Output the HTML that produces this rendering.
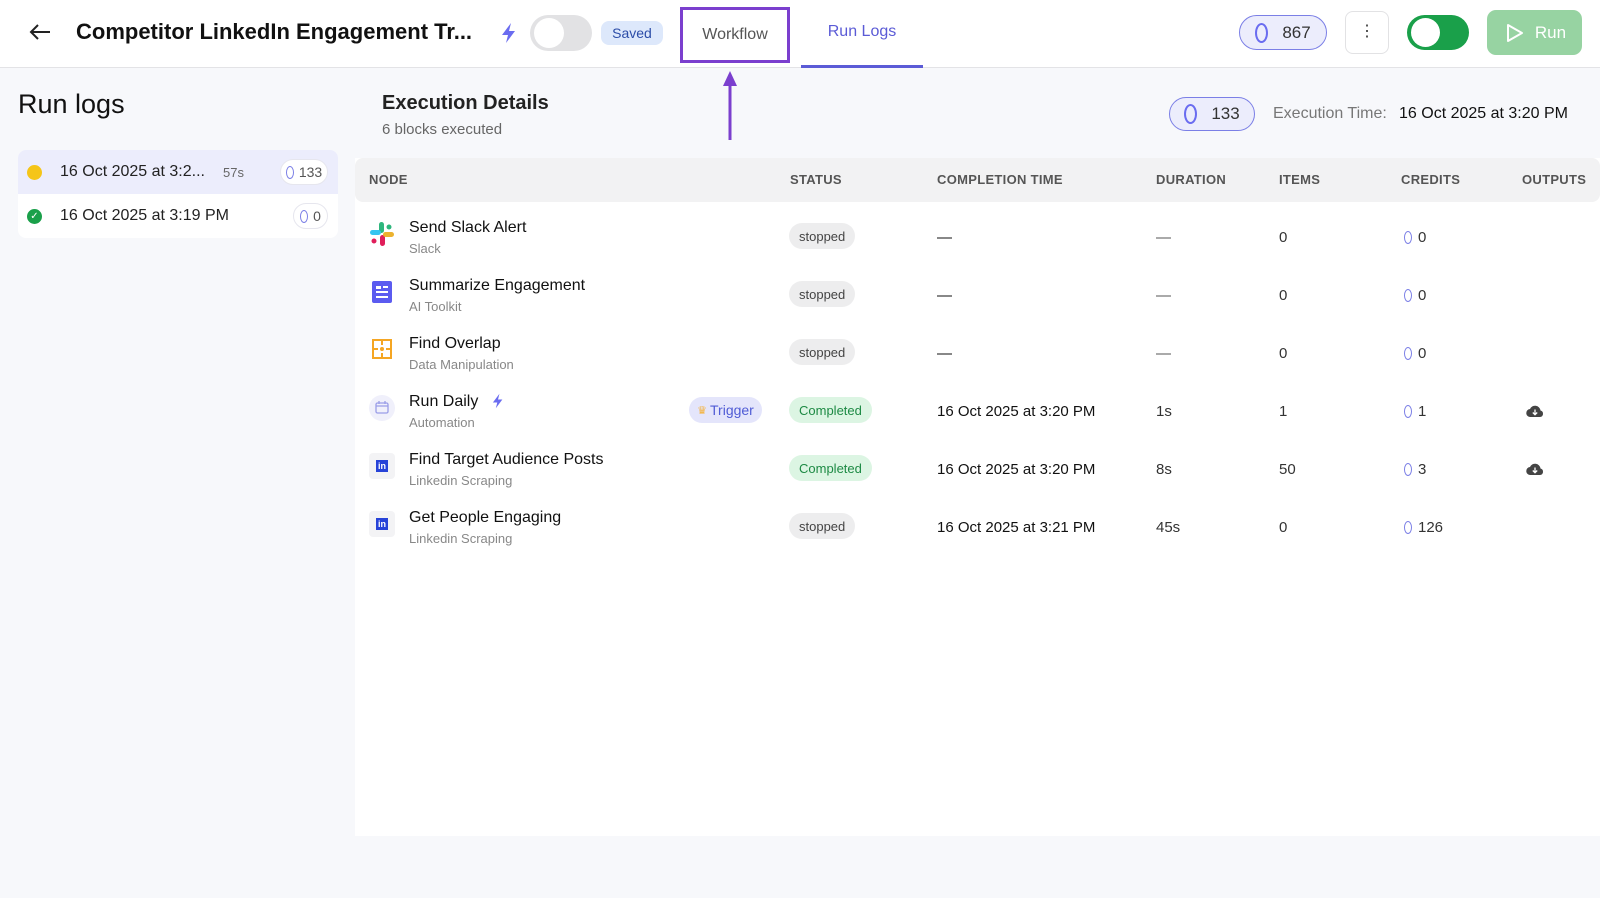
<!DOCTYPE html>
<html><head><meta charset="utf-8"><style>
*{box-sizing:border-box;margin:0;padding:0}
body{width:1600px;height:898px;overflow:hidden;background:#f7f8fb;font-family:"Liberation Sans",sans-serif;color:#111;position:relative}
.a{position:absolute}
.hdr{left:0;top:0;width:1600px;height:68px;background:#fff;border-bottom:1px solid #e3e3e6}
.pill{border-radius:20px;display:flex;align-items:center;justify-content:center}
.th{top:172px;font-size:13px;color:#555;letter-spacing:.3px;font-weight:bold}
.st{height:26px;border-radius:13px;font-size:13px;display:flex;align-items:center;padding:0 10px}
.stop{background:#ededee;color:#444}
.comp{background:#dcf5e3;color:#1d8a44}
.nm{left:409px;font-size:16px}
.sb{left:409px;font-size:13px;color:#888}
.cell{font-size:15px;margin-top:2px}
.coin{display:inline-block;width:8px;height:13px;border:1.5px solid #7b7fe6;border-radius:50%;vertical-align:-2px;margin-right:6px}
</style></head><body>
<div class="a hdr"></div>
<svg class="a" style="left:28px;top:22px" width="24" height="20" viewBox="0 0 24 20"><path d="M22 10H3M10 3L3 10l7 7" stroke="#222" stroke-width="2" fill="none"/></svg>
<div class="a" style="left:76px;top:19px;font-size:22px;font-weight:bold">Competitor LinkedIn Engagement Tr...</div>
<svg class="a" style="left:500px;top:22px" width="18" height="22" viewBox="0 0 18 22"><path d="M11 1L2 13h6l-2 8 9-12H9z" fill="#6a6cf0"/></svg>
<div class="a" style="left:530px;top:15px;width:62px;height:36px;border-radius:18px;background:#e2e2e4"><div class="a" style="left:4px;top:3px;width:30px;height:30px;border-radius:50%;background:#fff"></div></div>
<div class="a pill" style="left:601px;top:21px;width:62px;height:24px;background:#dde8fb;color:#2c4da8;font-size:14px;border-radius:8px">Saved</div>
<div class="a" style="left:680px;top:7px;width:110px;height:56px;border:3px solid #7b3fce;display:flex;align-items:center;justify-content:center;font-size:16px;color:#555">Workflow</div>
<svg class="a" style="left:722px;top:70px" width="16" height="72" viewBox="0 0 16 72"><path d="M8 4V70" stroke="#7b3fce" stroke-width="3"/><path d="M1 16L8 1l7 15z" fill="#7b3fce"/></svg>
<div class="a" style="left:801px;top:23px;width:122px;text-align:center;font-size:16px;color:#5b5bd6">Run Logs</div>
<div class="a" style="left:801px;top:65px;width:122px;height:3px;background:#5b5bd6"></div>
<div class="a pill" style="left:1239px;top:15px;width:88px;height:35px;background:#ecedfc;border:1.5px solid #7b7fe6;font-size:17px;color:#333"><span style="display:inline-block;width:13px;height:20px;border:2px solid #6a6cf0;border-radius:50%;margin-right:14px"></span>867</div>
<div class="a" style="left:1345px;top:11px;width:44px;height:43px;border:1px solid #e2e2e4;border-radius:8px;background:#fff;text-align:center;font-size:16px;line-height:40px;color:#333">⋮</div>
<div class="a" style="left:1407px;top:15px;width:62px;height:35px;border-radius:18px;background:#1aa04a"><div class="a" style="left:4px;top:3px;width:29px;height:29px;border-radius:50%;background:#fff"></div></div>
<div class="a pill" style="left:1487px;top:10px;width:95px;height:45px;border-radius:9px;background:#97d3a2;color:#fff;font-size:17px"><svg width="22" height="22" viewBox="0 0 22 22" style="margin-right:10px"><path d="M5 3l14 8-14 8z" stroke="#fff" stroke-width="2" fill="none" stroke-linejoin="round"/></svg>Run</div>

<div class="a" style="left:18px;top:89px;font-size:27px">Run logs</div>
<div class="a" style="left:18px;top:150px;width:320px;height:88px;background:#fff;border-radius:8px;overflow:hidden">
 <div style="height:44px;background:#ecedfc;position:relative">
  <div class="a" style="left:9px;top:15px;width:15px;height:15px;border-radius:50%;background:#f5c518"></div>
  <div class="a" style="left:42px;top:13px;font-size:16px;color:#222">16 Oct 2025 at 3:2...</div>
  <div class="a" style="left:205px;top:15px;font-size:13px;color:#666">57s</div>
  <div class="a pill" style="left:262px;top:9px;width:48px;height:26px;background:#fff;border:1px solid #e6e6ee;font-size:14px;color:#555"><span class="coin" style="margin-right:5px"></span>133</div>
 </div>
 <div style="height:44px;position:relative">
  <div class="a" style="left:9px;top:15px;width:15px;height:15px;border-radius:50%;background:#1aa04a;color:#fff;font-size:10px;text-align:center;line-height:15px">✓</div>
  <div class="a" style="left:42px;top:13px;font-size:16px;color:#222">16 Oct 2025 at 3:19 PM</div>
  <div class="a pill" style="left:275px;top:9px;width:35px;height:26px;border:1px solid #e6e6ee;font-size:14px;color:#555"><span class="coin" style="margin-right:5px"></span>0</div>
 </div>
</div>

<div class="a" style="left:382px;top:92px;font-size:20px;font-weight:bold;color:#222">Execution Details</div>
<div class="a" style="left:382px;top:121px;font-size:15px;color:#666">6 blocks executed</div>
<div class="a pill" style="left:1169px;top:97px;width:86px;height:34px;background:#ecedfc;border:1.5px solid #7b7fe6;font-size:17px;color:#333"><span style="display:inline-block;width:13px;height:20px;border:2px solid #6a6cf0;border-radius:50%;margin-right:14px"></span>133</div>
<div class="a" style="left:1273px;top:105px;font-size:16px;color:#777">Execution Time:</div>
<div class="a" style="left:1399px;top:105px;font-size:16px;color:#111">16 Oct 2025 at 3:20 PM</div>

<div class="a" style="left:355px;top:158px;width:1245px;height:678px;background:#fff"></div>
<div class="a" style="left:355px;top:158px;width:1245px;height:44px;background:#f2f2f3;border-radius:8px"></div>
<div class="a th" style="left:369px">NODE</div>
<div class="a th" style="left:790px">STATUS</div>
<div class="a th" style="left:937px">COMPLETION TIME</div>
<div class="a th" style="left:1156px">DURATION</div>
<div class="a th" style="left:1279px">ITEMS</div>
<div class="a th" style="left:1401px">CREDITS</div>
<div class="a th" style="left:1522px">OUTPUTS</div>

<svg class="a" style="left:369px;top:221px" width="26" height="26" viewBox="0 0 26 26"><rect x="10" y="1" width="5" height="11" rx="2.5" fill="#2eb67d"/><rect x="1" y="9" width="11" height="5" rx="2.5" fill="#36c5f0"/><rect x="11" y="14" width="5" height="11" rx="2.5" fill="#e01e5a"/><rect x="14" y="11" width="11" height="5" rx="2.5" fill="#ecb22e"/><circle cx="20" cy="6" r="2.5" fill="#2eb67d"/><circle cx="5" cy="20" r="2.5" fill="#e01e5a"/></svg>
<svg class="a" style="left:372px;top:281px" width="20" height="22" viewBox="0 0 20 22"><rect width="20" height="22" rx="2" fill="#5b5bf0"/><rect x="4" y="5" width="5" height="3" fill="#fff"/><rect x="11" y="5" width="5" height="2" fill="#fff"/><rect x="4" y="10" width="12" height="2" fill="#fff"/><rect x="4" y="15" width="12" height="2" fill="#fff"/></svg>
<svg class="a" style="left:372px;top:339px" width="20" height="20" viewBox="0 0 20 20"><rect x="1" y="1" width="18" height="18" fill="none" stroke="#f5a623" stroke-width="2"/><path d="M10 1v5M10 14v5M1 10h5M14 10h5" stroke="#f5a623" stroke-width="2"/><circle cx="10" cy="10" r="2" fill="#f5a623"/></svg>
<div class="a" style="left:369px;top:395px;width:26px;height:26px;border-radius:50%;background:#f0f0fb"><svg width="26" height="26" viewBox="0 0 26 26"><rect x="7" y="8" width="12" height="10" rx="1.5" fill="none" stroke="#9a9de8" stroke-width="1.3"/><path d="M7 11h12M10 6v3M16 6v3" stroke="#9a9de8" stroke-width="1.3"/></svg></div>
<div class="a" style="left:369px;top:453px;width:26px;height:26px;border-radius:4px;background:#f3f3f5"><div style="margin:7px;width:12px;height:12px;background:#2743d8;color:#fff;font-size:9px;font-weight:bold;line-height:12px;text-align:center">in</div></div>
<div class="a" style="left:369px;top:511px;width:26px;height:26px;border-radius:4px;background:#f3f3f5"><div style="margin:7px;width:12px;height:12px;background:#2743d8;color:#fff;font-size:9px;font-weight:bold;line-height:12px;text-align:center">in</div></div>

<div class="a nm" style="top:219px">Send Slack Alert</div><div class="a sb" style="top:241px">Slack</div>
<div class="a nm" style="top:277px">Summarize Engagement</div><div class="a sb" style="top:299px">AI Toolkit</div>
<div class="a nm" style="top:335px">Find Overlap</div><div class="a sb" style="top:357px">Data Manipulation</div>
<div class="a nm" style="top:393px">Run Daily</div><div class="a sb" style="top:415px">Automation</div>
<svg class="a" style="left:491px;top:393px" width="14" height="16" viewBox="0 0 18 22"><path d="M11 1L2 13h6l-2 8 9-12H9z" fill="#6a6cf0"/></svg>
<div class="a nm" style="top:451px">Find Target Audience Posts</div><div class="a sb" style="top:473px">Linkedin Scraping</div>
<div class="a nm" style="top:509px">Get People Engaging</div><div class="a sb" style="top:531px">Linkedin Scraping</div>
<div class="a pill" style="left:689px;top:397px;width:73px;height:26px;background:#e4e5fb;color:#4f5bd5;font-size:14px"><span style="color:#f5b23a;font-size:11px;margin-right:3px">♛</span>Trigger</div>

<div class="a st stop" style="left:789px;top:223px">stopped</div>
<div class="a st stop" style="left:789px;top:281px">stopped</div>
<div class="a st stop" style="left:789px;top:339px">stopped</div>
<div class="a st comp" style="left:789px;top:397px">Completed</div>
<div class="a st comp" style="left:789px;top:455px">Completed</div>
<div class="a st stop" style="left:789px;top:513px">stopped</div>

<div class="a cell" style="left:937px;top:227px">—</div>
<div class="a cell" style="left:937px;top:285px">—</div>
<div class="a cell" style="left:937px;top:343px">—</div>
<div class="a cell" style="left:937px;top:401px">16 Oct 2025 at 3:20 PM</div>
<div class="a cell" style="left:937px;top:459px">16 Oct 2025 at 3:20 PM</div>
<div class="a cell" style="left:937px;top:517px">16 Oct 2025 at 3:21 PM</div>

<div class="a cell" style="left:1156px;top:227px;color:#555">—</div>
<div class="a cell" style="left:1156px;top:285px;color:#555">—</div>
<div class="a cell" style="left:1156px;top:343px;color:#555">—</div>
<div class="a cell" style="left:1156px;top:401px;color:#333">1s</div>
<div class="a cell" style="left:1156px;top:459px;color:#333">8s</div>
<div class="a cell" style="left:1156px;top:517px;color:#333">45s</div>

<div class="a cell" style="left:1279px;top:227px;color:#333">0</div>
<div class="a cell" style="left:1279px;top:285px;color:#333">0</div>
<div class="a cell" style="left:1279px;top:343px;color:#333">0</div>
<div class="a cell" style="left:1279px;top:401px;color:#333">1</div>
<div class="a cell" style="left:1279px;top:459px;color:#333">50</div>
<div class="a cell" style="left:1279px;top:517px;color:#333">0</div>

<div class="a cell" style="left:1404px;top:227px;color:#333"><span class="coin"></span>0</div>
<div class="a cell" style="left:1404px;top:285px;color:#333"><span class="coin"></span>0</div>
<div class="a cell" style="left:1404px;top:343px;color:#333"><span class="coin"></span>0</div>
<div class="a cell" style="left:1404px;top:401px;color:#333"><span class="coin"></span>1</div>
<div class="a cell" style="left:1404px;top:459px;color:#333"><span class="coin"></span>3</div>
<div class="a cell" style="left:1404px;top:517px;color:#333"><span class="coin"></span>126</div>

<svg class="a" style="left:1526px;top:404px" width="18" height="14" viewBox="0 0 18 14"><path d="M4.5 13a4 4 0 0 1-.5-8 5.5 5.5 0 0 1 10.5 1.5A3.3 3.3 0 0 1 14 13z" fill="#444"/><path d="M9 5.5v5M6.8 8.5L9 10.7l2.2-2.2" stroke="#fff" stroke-width="1.3" fill="none"/></svg>
<svg class="a" style="left:1526px;top:462px" width="18" height="14" viewBox="0 0 18 14"><path d="M4.5 13a4 4 0 0 1-.5-8 5.5 5.5 0 0 1 10.5 1.5A3.3 3.3 0 0 1 14 13z" fill="#444"/><path d="M9 5.5v5M6.8 8.5L9 10.7l2.2-2.2" stroke="#fff" stroke-width="1.3" fill="none"/></svg>
</body></html>
